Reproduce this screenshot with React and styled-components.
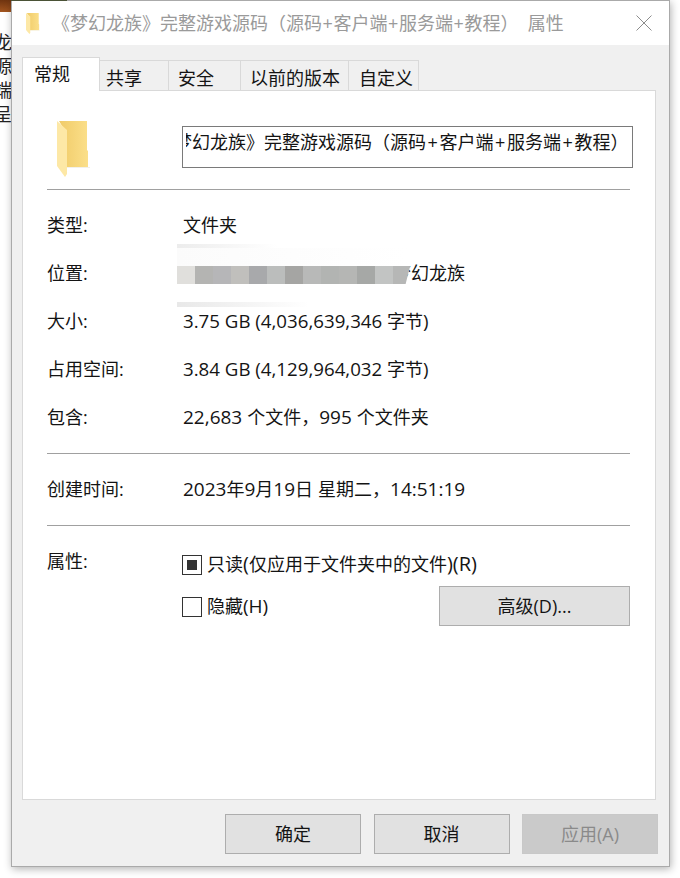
import React from 'react';
import styled, { createGlobalStyle } from 'styled-components';

const Global = createGlobalStyle`
  html, body { margin: 0; padding: 0; background: #fff; }
  body { width: 680px; height: 878px; overflow: hidden; font-family: "Open Sans", "Noto Sans CJK SC", sans-serif; color: #141414; }
`;
const Page = styled.div`display: flex; width: 680px; height: 878px; overflow: hidden; background: #fff;`;
const Behind = styled.div`
  width: 11px; flex: none; height: 200px; overflow: hidden; display: flex; flex-direction: column;
  font-size: 18px; line-height: 24px; white-space: nowrap; color: #222;
`;
const Wood = styled.div`height: 12px; background: linear-gradient(#6f3410, #a3551f); margin-bottom: 18px; flex: none;`;
const SliverText = styled.div`margin-left: -6px;`;
const Window = styled.div`
  position: relative; width: 659px; height: 867px; flex: none; box-sizing: border-box; display: flex; flex-direction: column;
  background: #f0f0f0; border: 1px solid #aaa;
  box-shadow: 1px 2px 8px rgba(0,0,0,.3);
  &::before { content: ""; position: absolute; top: -1px; left: -1px; width: 56px; height: 1px; background: #4a5236; }
`;
const TitleBar = styled.div`
  height: 44px; flex: none; background: #fff; display: flex; align-items: center; box-sizing: border-box;
  padding: 0 17px 0 14px; gap: 12px; color: #9a9a9a; font-size: 18px; white-space: nowrap;
`;
const TitleText = styled.span`flex: 1; padding-bottom: 3px;`;
const Plus = styled.span`margin: 0 ${p => p.$m}px;`;
const Tabs = styled.div`display: flex; align-items: flex-end; height: 45px; flex: none; padding-left: 10px; position: relative; z-index: 1;`;
const Tab = styled.div`
  box-sizing: border-box; width: ${p => p.$w}px; height: ${p => (p.$active ? 34 : 30)}px; margin-bottom: ${p => (p.$active ? -1 : 0)}px;
  background: ${p => (p.$active ? '#fff' : '#f0f0f0')}; border: 1px solid #d9d9d9; border-bottom: none;
  ${p => (p.$active ? '' : 'border-left: none;')}
  font-size: 18px; display: flex; align-items: center; white-space: nowrap;
  padding: ${p => (p.$active ? '0 0 3px' : '2px 0 0')} ${p => p.$pad}px;
`;
const Panel = styled.div`
  box-sizing: border-box; margin: 0 13px 0 10px; height: 710px; background: #fff; border: 1px solid #d9d9d9; padding: 0 25px 0 24px;
  display: flex; flex-direction: column;
`;
const Head = styled.div`display: flex; align-items: flex-start; height: 99px; flex: none; box-sizing: border-box; border-bottom: 1px solid #a0a0a0; padding: 30px 0 0 10px;`;
const NameBox = styled.div`
  margin: 5px -3px 0 92px; width: 451px; height: 42px; flex: none; box-sizing: border-box; border: 1px solid #7a7a7a; font-size: 18px;
  padding: 0 3px;
`;
const NameClip = styled.div`overflow: hidden; white-space: nowrap; line-height: 30px;`;
const NameText = styled.span`margin-left: -30px; display: inline-block;`;
const Section = styled.div`display: flex; flex-direction: column; flex: none; padding: ${p => p.$pad}; border-bottom: ${p => (p.$last ? 'none' : '1px solid #a0a0a0')};`;
const Row = styled.div`display: flex; height: 48px; box-sizing: border-box; padding-bottom: 4px; align-items: center; font-size: 18px; white-space: nowrap;`;
const Value = styled.span`white-space: pre;`;
const L = styled.span`font-size: ${p => p.$size || 19}px;`;
const Label = styled.div`width: 136px; flex: none;`;
const AttrLabel = styled(Label)`padding-top: 3px;`;
const Blur = styled.div`display: flex; height: 18px; flex: none; margin: 6px -18px 0 -6px; position: relative; z-index: 1;`;
const BlurCell = styled.div`width: 18px; height: 18px; &:last-of-type { clip-path: polygon(0 0, 95% 0, 70% 100%, 0 100%); }`;
const Smear = styled.div`
  position: absolute; left: 0; height: ${p => p.$h}px; width: ${p => p.$w}px; top: ${p => p.$top}px;
  background: linear-gradient(90deg, ${p => p.$c}, #fff);
`;
const AttrRow = styled.div`display: flex; align-items: flex-start; padding-top: 18px; font-size: 18px;`;
const Checks = styled.div`display: flex; flex-direction: column; flex: 1;`;
const CheckRow = styled.div`display: flex; align-items: center; height: 42px; white-space: nowrap; justify-content: space-between;`;
const CheckLabel = styled.div`display: flex; align-items: center; gap: 5px; margin-left: -1px;`;
const CheckText = styled.span`padding-bottom: 3px;`;
const Box = styled.span`
  width: 20px; height: 20px; box-sizing: border-box; border: 1px solid #333; display: flex; align-items: center; justify-content: center; background: #fff;
  &::after { content: ""; width: 10px; height: 10px; background: ${p => (p.$on ? '#333' : 'transparent')}; }
`;
const Button = styled.div`
  box-sizing: border-box; width: ${p => p.$w || 136}px; height: 40px; flex: none; border: 1px solid ${p => (p.$disabled ? '#c8c8c8' : '#adadad')};
  background: ${p => (p.$disabled ? '#cacaca' : '#e1e1e1')}; color: ${p => (p.$disabled ? '#8a8a8a' : '#141414')};
  display: flex; align-items: center; justify-content: center; font-size: 18px; padding-bottom: 3px;
`;
const AdvancedButton = styled(Button)`margin-bottom: 2px;`;
const Footer = styled.div`flex: 1; display: flex; justify-content: flex-end; gap: 12.5px; padding: 14px 11px 0 0;`;

const Folder = ({ w, h, id }) => (
  <svg width={w} height={h} viewBox="0 0 33 56" preserveAspectRatio="none" aria-hidden="true">
    <defs>
      <linearGradient id={id} x1="0" y1="0" x2="1" y2="0">
        <stop offset="0" stopColor="#f0cb68" />
        <stop offset="1" stopColor="#fbdf8a" />
      </linearGradient>
    </defs>
    <path d="M2 0H30V29L31 30V46H8V10Z" fill={`url(#${id})`} />
    <path d="M8 46H33V47H8Z" fill="#f2f0ea" />
    <path d="M0 0L10 9V53L8 56L0 45Z" fill="#fde8a6" />
  </svg>
);

const blurred = ['#e0dfdc','#b4b4b2','#b6b6b8','#c0bfbc','#a8a9ab','#bbbdbc','#a5a5a3','#b8b9b8','#b2b4b2','#b5b6b4','#a6a8a6','#c2c4c3','#b6b7b6'];

export default function App() {
  return (
    <Page>
      <Global />
      <Behind>
        <Wood />
        <SliverText>龙</SliverText>
        <SliverText>源</SliverText>
        <SliverText>端</SliverText>
        <SliverText>呈</SliverText>
      </Behind>
      <Window>
        <TitleBar>
          <Folder w={14} h={21} id="folderSmall" />
          <TitleText>
            《梦幻龙族》完整游戏源码（源码<Plus $m={0.6}>+</Plus>客户端<Plus $m={0.6}>+</Plus>服务端<Plus $m={0.6}>+</Plus>教程）&nbsp;&nbsp;属性
          </TitleText>
          <svg width="16" height="16" viewBox="0 0 16 16" aria-hidden="true"><path d="M0.5 0.5L15.5 15.5M15.5 0.5L0.5 15.5" stroke="#8c8c8c" strokeWidth="1" fill="none" /></svg>
        </TitleBar>
        <Tabs>
          <Tab $active $w={78} $pad={11}>常规</Tab>
          <Tab $w={69} $pad={6}>共享</Tab>
          <Tab $w={72} $pad={9}>安全</Tab>
          <Tab $w={108} $pad={9}>以前的版本</Tab>
          <Tab $w={70} $pad={10}>自定义</Tab>
        </Tabs>
        <Panel>
          <Head>
            <Folder w={33} h={56} id="folderLarge" />
            <NameBox>
              <NameClip>
                <NameText>《梦幻龙族》完整游戏源码（源码<Plus $m={1.6}>+</Plus>客户端<Plus $m={1.6}>+</Plus>服务端<Plus $m={1.6}>+</Plus>教程）</NameText>
              </NameClip>
            </NameBox>
          </Head>
          <Section $pad="12px 0 11px">
            <Row><Label>类型:</Label><Value>文件夹</Value></Row>
            <Row>
              <Label>位置:</Label>
              <Blur>
                <Smear $top={-22} $h={4} $w={100} $c="#ececec" />
                <Smear $top={-18} $h={18} $w={230} $c="#fbfbfb" />
                <Smear $top={36} $h={5} $w={132} $c="#e8e8e8" />
                {blurred.map((c, i) => <BlurCell key={i} style={{ background: c }} />)}
              </Blur>
              <Value>梦幻龙族</Value>
            </Row>
            <Row><Label>大小:</Label><Value><L $size={18.7}>3.75 GB (4,036,639,346 </L>字节<L $size={18.7}>)</L></Value></Row>
            <Row><Label>占用空间:</Label><Value><L $size={18.7}>3.84 GB (4,129,964,032 </L>字节<L $size={18.7}>)</L></Value></Row>
            <Row><Label>包含:</Label><Value><L>22,683 </L>个文件，<L>995 </L>个文件夹</Value></Row>
          </Section>
          <Section $pad="12px 0 11px">
            <Row><Label>创建时间:</Label><Value><L>2023</L>年<L>9</L>月<L>19</L>日<L> </L>星期二，<L>14:51:19</L></Value></Row>
          </Section>
          <Section $last $pad="0">
            <AttrRow>
              <AttrLabel>属性:</AttrLabel>
              <Checks>
                <CheckRow>
                  <CheckLabel><Box $on /><CheckText>只读<L $size={20}>(</L>仅应用于文件夹中的文件<L $size={20}>)(R)</L></CheckText></CheckLabel>
                </CheckRow>
                <CheckRow>
                  <CheckLabel><Box /><CheckText>隐藏<L>(H)</L></CheckText></CheckLabel>
                  <AdvancedButton $w={191}>高级(D)...</AdvancedButton>
                </CheckRow>
              </Checks>
            </AttrRow>
          </Section>
        </Panel>
        <Footer>
          <Button>确定</Button>
          <Button>取消</Button>
          <Button $disabled>应用(A)</Button>
        </Footer>
      </Window>
    </Page>
  );
}
